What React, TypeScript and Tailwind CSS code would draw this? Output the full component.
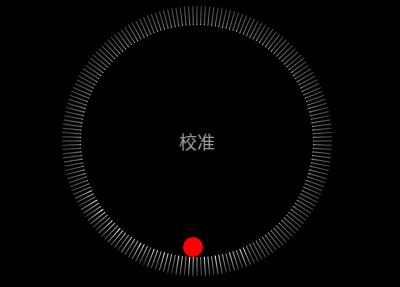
import React from 'react';

const SIZE = 276;
const C = SIZE / 2;
const R_IN = 116;
const R_OUT = 135;
const COUNT = 200;

// ticks every 1.8 degrees, 0deg = right, clockwise
const ticks = Array.from({ length: COUNT }, (_, i) => {
  const deg = (i * 360) / COUNT;
  const rad = (deg * Math.PI) / 180;
  const cos = Math.cos(rad);
  const sin = Math.sin(rad);
  const lit = deg >= 66 && deg <= 156;
  const level = lit ? 0.6 + 0.4 * (((i * 37) % 7) / 6) : 1;
  return {
    key: i,
    x1: C + R_IN * cos,
    y1: C + R_IN * sin,
    x2: C + R_OUT * cos,
    y2: C + R_OUT * sin,
    lit,
    level,
  };
});

const Dial: React.FC = () => (
  <svg width={SIZE} height={SIZE} viewBox={`0 0 ${SIZE} ${SIZE}`} className="block">
    <defs>
      <radialGradient id="tickDim" gradientUnits="userSpaceOnUse" cx={C} cy={C} r={R_OUT}>
        <stop offset="0.86" stopColor="#c0c0c0" />
        <stop offset="0.872" stopColor="#6a6a6a" />
        <stop offset="1" stopColor="#474747" />
      </radialGradient>
      <radialGradient id="tickLit" gradientUnits="userSpaceOnUse" cx={C} cy={C} r={R_OUT}>
        <stop offset="0.86" stopColor="#f0f0f0" />
        <stop offset="0.9" stopColor="#bdbdbd" />
        <stop offset="1" stopColor="#5a5a5a" />
      </radialGradient>
    </defs>
    {ticks.map((t) => (
      <line
        key={t.key}
        x1={t.x1}
        y1={t.y1}
        x2={t.x2}
        y2={t.y2}
        stroke={t.lit ? 'url(#tickLit)' : 'url(#tickDim)'}
        strokeOpacity={t.level}
        strokeWidth={1.1}
      />
    ))}
  </svg>
);

export default function App() {
  return (
    <div className="w-[400px] h-[287px] bg-black overflow-hidden pl-[59px] pt-[3px]">
      <div className="relative w-[276px] h-[276px]">
        <Dial />
        {/* center label */}
        <div className="absolute inset-0 flex items-center justify-center">
          <span className="text-[18px] leading-none text-[#9a9a9a] font-['Noto_Sans_CJK_SC',sans-serif]">
            校准
          </span>
        </div>
        {/* pointer */}
        <div className="absolute left-[124px] top-[234px] w-[20px] h-[20px] rounded-full bg-[#ff0000]" />
      </div>
    </div>
  );
}
